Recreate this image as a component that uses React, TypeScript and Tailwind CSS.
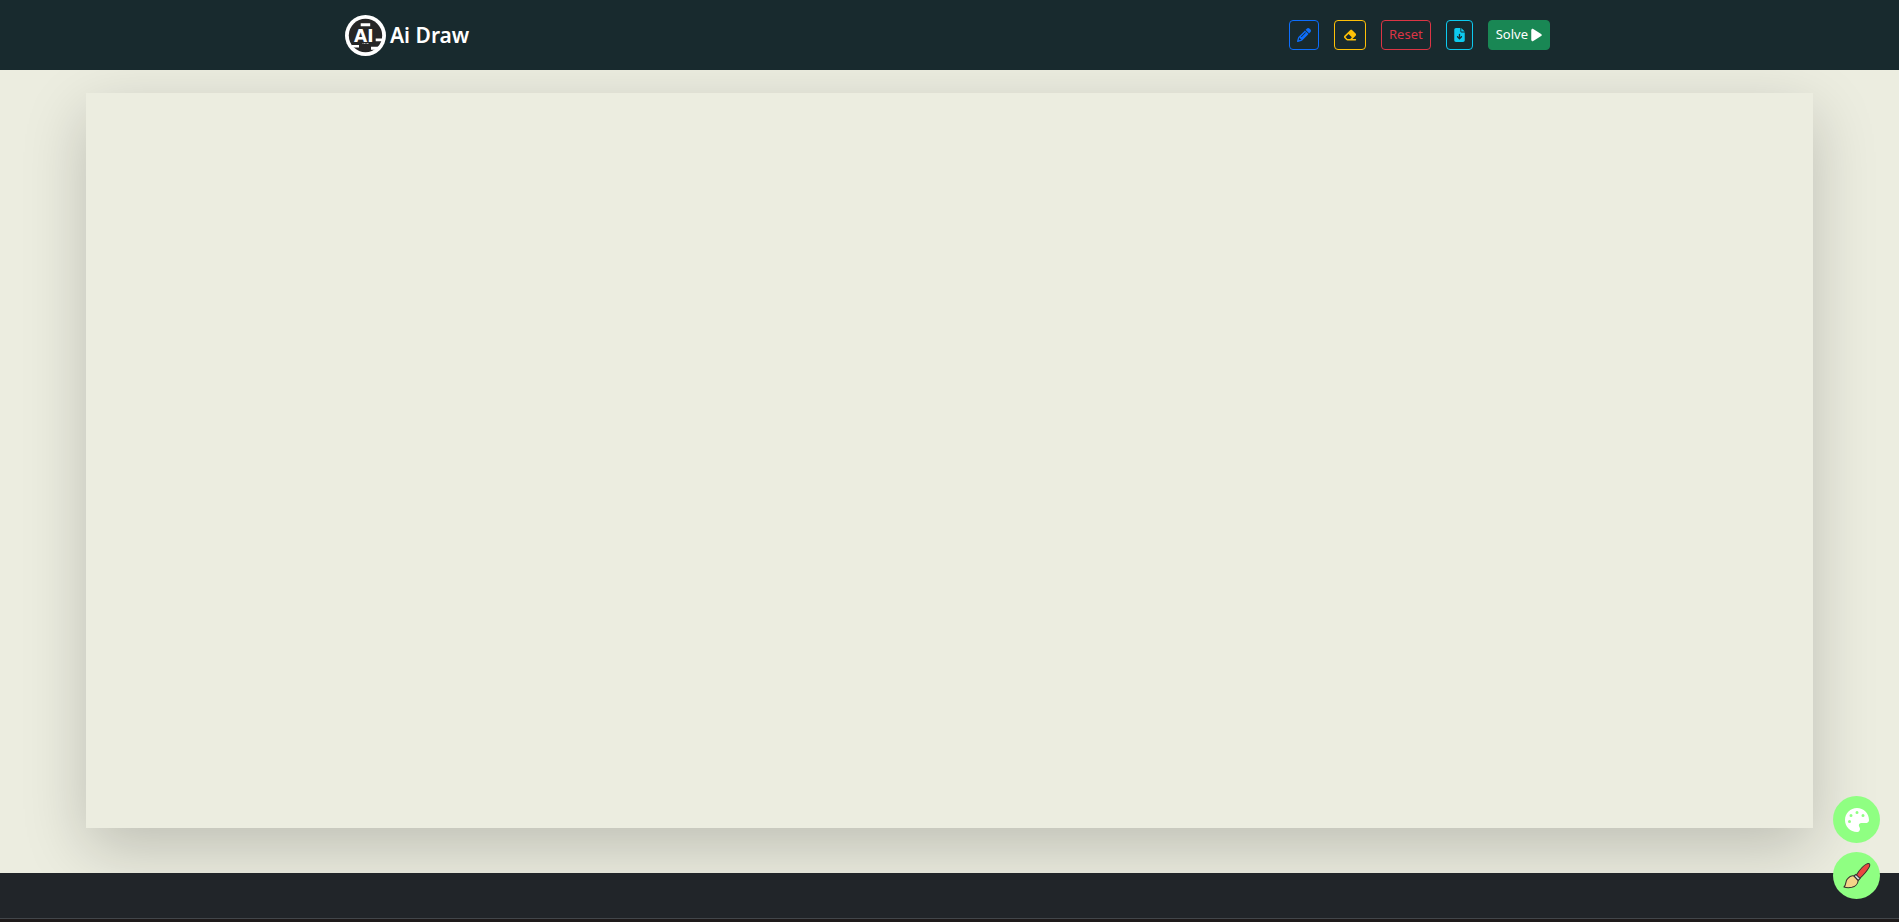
import { useState } from 'react';
import { FaEraser, FaFileArrowDown, FaPalette, FaPencil, FaPlay } from 'react-icons/fa6';

function Logo() {
    return (
        <svg viewBox="0 0 41 41" className="h-[41px] w-[41px]" aria-hidden="true">
            <circle cx="20.500" cy="20.500" r="20.500" fill="#fff" />
            <circle cx="20.500" cy="20.500" r="16.700" fill="#262626" />
            <path d="M15.700 8.300h9.500v3h-9.500z M30.700 23.400h8v2.800h-8z M26 31.800h9v3h-9z M7 30h7v2.500h-7z" fill="#fff" />
            <text x="9" y="26.600" fontSize="17" fontWeight="700" fill="#fff" className="font-['DejaVu_Sans',sans-serif]">
                AI
            </text>
            <path d="M17.500 28.500h6.500" stroke="#aaa" strokeWidth="1" strokeDasharray="1 .5" />
        </svg>
    );
}

function BrushIcon() {
    return (
        <svg viewBox="0 0 30 28" className="h-[27px] w-7" aria-hidden="true" stroke="#37302d" strokeWidth="1.100" strokeLinejoin="round">
            <path d="M13.800 14.200 C17 9 22 3 26 1.300 C28.500 .5 29.300 2 28.300 4.500 C26 9 21.500 14 17.500 17.500 Z" fill="#e8473f" />
            <path d="M11.500 14.500 L13.800 12.800 L18.300 17 L16.200 19.500 Z" fill="#d5dce3" />
            <path d="M1 26.300 C4 24 2 20 5 17.300 C7.500 14.500 10 14 11.500 14.500 L16.200 19.500 C16 23 13 26 9.500 26.700 C6.500 27.200 3 27 1 26.300 Z" fill="#f4d488" />
        </svg>
    );
}

const btn = 'flex h-[30px] items-center rounded border px-[7px] text-[13px]';
const fab = 'flex h-[47px] w-[47px] items-center justify-center rounded-full bg-[#8fff82] text-white';

function App() {
    const [tool, setTool] = useState<string>('pencil');

    return (
        <div className="flex min-h-screen flex-col bg-[#ecede0] font-['Noto_Sans',sans-serif]">
            <nav className="relative z-10 bg-[#182a2e] px-4">
                <div className="mx-auto flex h-[70px] max-w-[1209px] items-center justify-between pr-1">
                    <a href="#" className="flex items-center gap-1 text-white">
                        <Logo />
                        <span className="text-[21px] leading-8 font-semibold">Ai Draw</span>
                    </a>
                    <div className="flex gap-[15px]">
                        <button
                            type="button"
                            aria-label="Pencil"
                            aria-pressed={tool === 'pencil'}
                            onClick={() => setTool('pencil')}
                            className={`${btn} border-[#0d6efd] text-[#0d6efd]`}
                        >
                            <FaPencil className="h-3.5 w-3.5" />
                        </button>
                        <button
                            type="button"
                            aria-label="Eraser"
                            aria-pressed={tool === 'eraser'}
                            onClick={() => setTool('eraser')}
                            className={`${btn} border-[#ffc107] text-[#ffc107]`}
                        >
                            <FaEraser className="h-3.5 w-4 px-px" />
                        </button>
                        <button type="button" className={`${btn} border-[#dc3545] text-[#dc3545]`}>
                            Reset
                        </button>
                        <button type="button" aria-label="Download" className={`${btn} border-[#0dcaf0] text-[#0dcaf0]`}>
                            <FaFileArrowDown className="h-3.5 w-[11px]" />
                        </button>
                        <button type="button" className={`${btn} gap-[3px] border-[#198754] bg-[#198754] text-white`}>
                            Solve
                            <FaPlay className="h-3.5 w-[11px]" />
                        </button>
                    </div>
                </div>
            </nav>

            <main className="px-[86px] pt-[23px] pb-[45px]">
                <canvas className="h-[calc(100vh-187px)] w-full bg-[#ecede0] shadow-[0_20px_60px_rgba(0,0,0,0.2)]" />
            </main>

            <footer className="relative border-b-3 border-[#1e1a1a] bg-[#212529]">
                <div className="h-[46px] border-b border-[#42464a]"></div>
            </footer>

            <div className="fixed right-[19px] bottom-[23px] z-20 flex flex-col gap-[9px]">
                <button type="button" aria-label="Color" className={fab}>
                    <FaPalette className="h-6 w-6" />
                </button>
                <button type="button" aria-label="Brush size" className={fab}>
                    <BrushIcon />
                </button>
            </div>
        </div>
    );
}

export default App;
